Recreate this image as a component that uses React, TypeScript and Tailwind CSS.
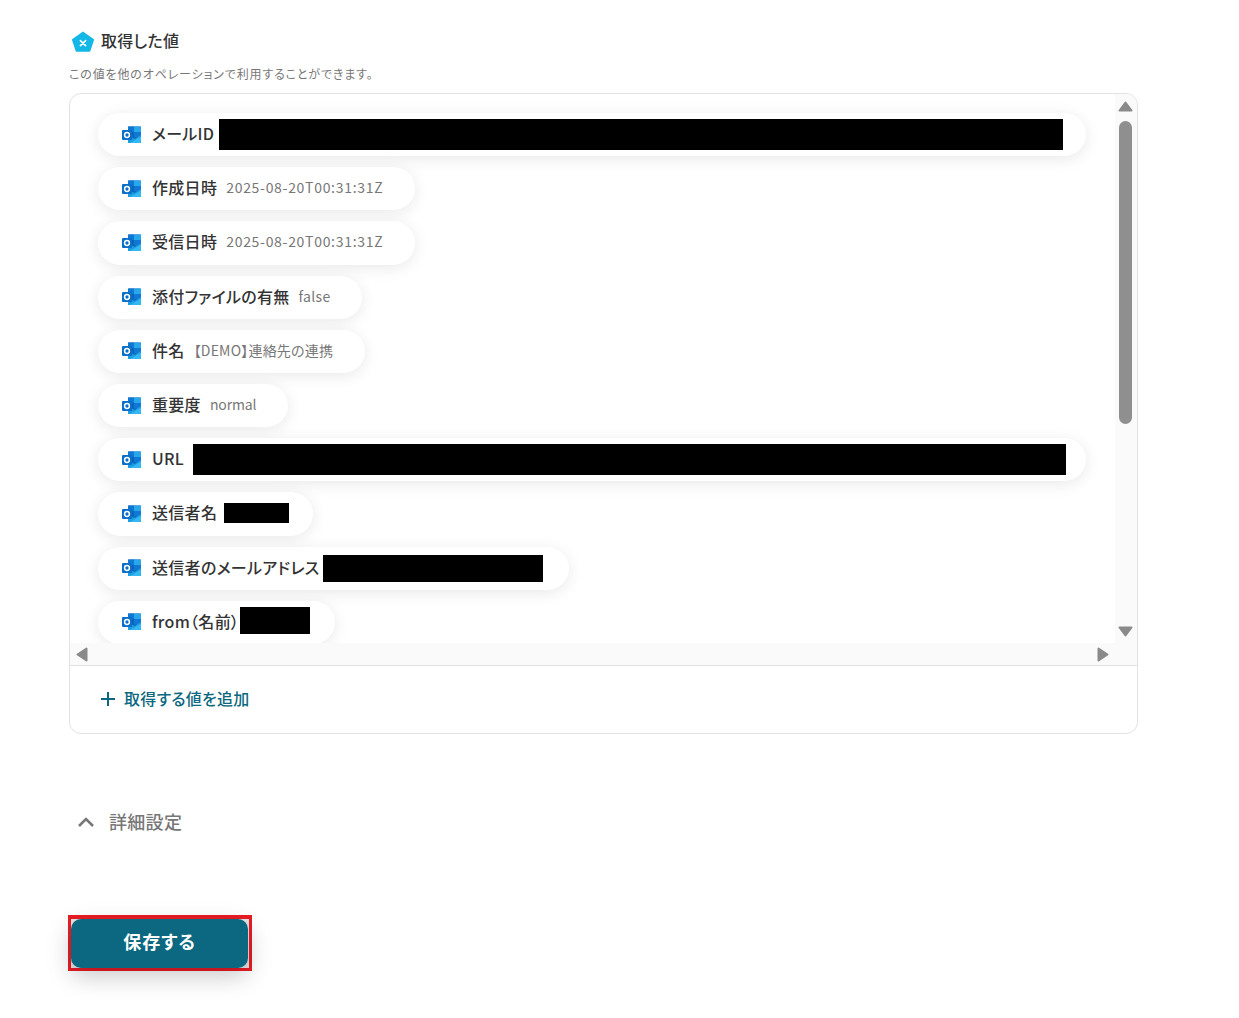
import React from "react";

type Row = {
  label: string;
  value?: string;
  valueClass?: string;
  // redacted block in the value slot
  hidden?: string;
  wide?: boolean;
};

const rows: Row[] = [
  { label: "メールID", hidden: "ml-[5px] w-[844px] h-[31px]", wide: true },
  { label: "作成日時", value: "2025-08-20T00:31:31Z", valueClass: "tracking-[0.7px]" },
  { label: "受信日時", value: "2025-08-20T00:31:31Z", valueClass: "tracking-[0.7px]" },
  { label: "添付ファイルの有無", value: "false", valueClass: "tracking-[0.3px]" },
  { label: "件名", value: "【DEMO】連絡先の連携", valueClass: "tracking-[0.2px]" },
  { label: "重要度", value: "normal", valueClass: "tracking-[-0.15px]" },
  { label: "URL", hidden: "ml-[9px] w-[873px] h-[31px]", wide: true },
  { label: "送信者名", hidden: "ml-[7px] w-[65px] h-[20px] mr-[24px] mb-[2px]" },
  { label: "送信者のメールアドレス", hidden: "ml-[3px] w-[220px] h-[27px] mr-[26px]" },
  { label: "from（名前）", hidden: "ml-[1px] w-[70px] h-[27px] mr-[25px] mb-[4px]" },
];

const OutlookIcon = () => (
  <svg width="20" height="18" viewBox="0 0 20 18" className="shrink-0">
    <rect x="6" y="0.5" width="13" height="16.5" rx="1" fill="#0a64b8" />
    <rect x="6" y="0.5" width="6" height="5.5" fill="#0f78d4" />
    <rect x="12" y="0.5" width="7" height="5.5" fill="#28a8ea" />
    <rect x="12" y="6" width="7" height="5.5" fill="#0f78d4" />
    <path d="M6 9l6.5 4L19 9v7a1 1 0 0 1-1 1H7a1 1 0 0 1-1-1z" fill="#1b9de2" />
    <path d="M8 17l11-6.5V16a1 1 0 0 1-1 1z" fill="#35b8f1" />
    <rect x="0" y="4" width="10" height="10" rx="1" fill="#0a6fc9" />
    <circle cx="5" cy="9" r="2.4" fill="none" stroke="#fff" strokeWidth="1.5" />
  </svg>
);

const Triangle = ({ dir }: { dir: "up" | "down" | "left" | "right" }) => {
  const paths = {
    up: "M7.5 1.5 L13.5 9.5 H1.5 Z",
    down: "M1.5 1.5 H13.5 L7.5 9.5 Z",
    left: "M10.5 1.5 V13.5 L1.5 7.5 Z",
    right: "M1.5 1.5 V13.5 L10.5 7.5 Z",
  };
  const horizontal = dir === "left" || dir === "right";
  return (
    <svg
      width={horizontal ? 12 : 15}
      height={horizontal ? 15 : 11}
      viewBox={horizontal ? "0 0 12 15" : "0 0 15 11"}
    >
      <path d={paths[dir]} fill="#8a8a8a" stroke="#8a8a8a" strokeWidth="2" strokeLinejoin="round" />
    </svg>
  );
};

const App: React.FC = () => {
  return (
    <div className="min-h-[1018px] bg-white pl-[69px] pt-[28px] font-['Noto_Sans_CJK_JP','Noto_Sans',sans-serif] [font-feature-settings:'palt']">
      <div className="w-[1069px]">
        <div className="flex items-center h-[24px]">
          <svg width="26" height="26" viewBox="0 0 26 26" className="ml-[1px] mt-[4px] shrink-0">
            <path
              d="M13 2.5l10.6 7.4c.4.3.5.7.4 1.1l-3.6 11c-.2.5-.6.8-1.1.8H6.7c-.5 0-.9-.3-1.1-.8L2 11c-.1-.4 0-.8.4-1.1z"
              fill="#14b8e6"
            />
            <path d="M10.4 11.6l5.2 5M15.6 11.6l-5.2 5" stroke="#fff" strokeWidth="1.6" strokeLinecap="round" />
          </svg>
          <h2 className="ml-[5px] text-[16px] font-medium tracking-[0.3px] text-[#333] leading-none">取得した値</h2>
        </div>
        <p className="mt-[12px] h-[20px] text-[12px] leading-[20px] tracking-[0.85px] text-[#777]">
          この値を他のオペレーションで利用することができます。
        </p>

        <div className="mt-[9px] h-[641px] rounded-[12px] border border-[#e2e2e2] overflow-hidden flex flex-col">
          <div className="h-[572px] flex flex-col border-b border-[#e2e2e2]">
            <div className="flex h-[549px]">
              <div className="flex-1 overflow-hidden pl-[28px] pt-[19px]">
                {rows.map((row) => (
                  <div
                    key={row.label}
                    className={`flex items-center h-[43.2px] mb-[11px] pl-[24px] rounded-full bg-white shadow-[0_3px_16px_rgba(0,0,0,0.09)] ${
                      row.wide ? "w-[988px]" : "w-fit"
                    }`}
                  >
                    <OutlookIcon />
                    <span className="ml-[10px] pb-[3px] text-[16px] font-medium tracking-[0.3px] text-[#333] whitespace-nowrap">
                      {row.label}
                    </span>
                    {row.value && (
                      <span className={`ml-[9px] mr-[32px] pb-[2px] text-[14px] text-[#777] whitespace-nowrap ${row.valueClass}`}>
                        {row.value}
                      </span>
                    )}
                    {row.hidden && <div className={`bg-black ${row.hidden}`} />}
                  </div>
                ))}
              </div>
              <div className="w-[22px] shrink-0 bg-[#fafafa] flex flex-col items-center pt-[7px] pr-[2px]">
                <Triangle dir="up" />
                <div className="mt-[9px] w-[13px] h-[303px] rounded-full bg-[#8f8f8f]" />
                <div className="mt-[202px]">
                  <Triangle dir="down" />
                </div>
              </div>
            </div>
            <div className="flex-1 bg-[#fafafa] flex items-center justify-between pl-[6px] pr-[28px]">
              <Triangle dir="left" />
              <Triangle dir="right" />
            </div>
          </div>
          <div className="flex-1 flex items-center pl-[30px] pb-[1px]">
            <svg width="16" height="16" viewBox="0 0 16 16">
              <path d="M8 1v14M1 8h14" stroke="#0b6880" strokeWidth="2" />
            </svg>
            <span className="ml-[8px] pb-[2px] text-[16px] font-medium tracking-[0.25px] text-[#0b6880]">取得する値を追加</span>
          </div>
        </div>

        <div className="mt-[74px] flex items-center h-[28px] pl-[8px]">
          <svg width="18" height="12" viewBox="0 0 18 12">
            <path d="M2 10l7-7 7 7" fill="none" stroke="#777" strokeWidth="2.6" />
          </svg>
          <span className="ml-[14px] pb-[2px] text-[18px] font-medium tracking-[0.3px] text-[#777]">詳細設定</span>
        </div>

        <div className="mt-[79px] ml-[-1px] w-[184px] h-[56px] border-x-[3px] border-t-[4px] border-b-[3px] border-[#ea1c24] bg-[#e4e4e4]">
          <button className="block w-[177px] h-[49px] pb-[5px] rounded-[10px] bg-[#0b6880] text-white text-[18px] font-bold tracking-[0.9px] shadow-[0_8px_24px_rgba(0,0,0,0.22)]">
            保存する
          </button>
        </div>
      </div>
    </div>
  );
};

export default App;
